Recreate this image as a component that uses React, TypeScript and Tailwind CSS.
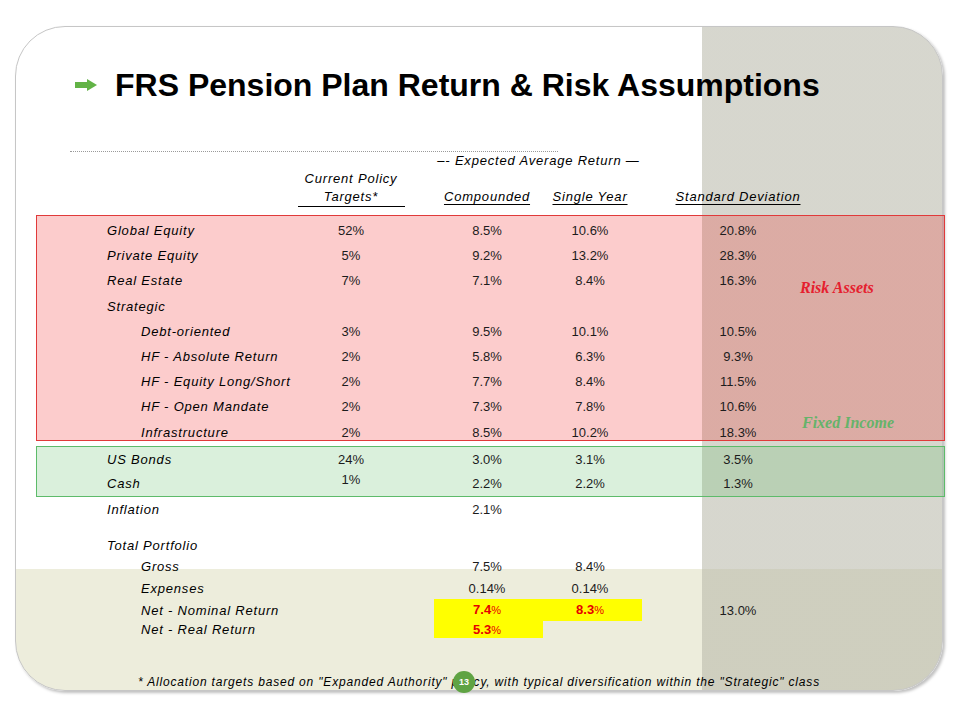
import React from "react";

type RowProps = {
  label: string;
  indent?: boolean;
  policy?: React.ReactNode;
  comp?: React.ReactNode;
  single?: React.ReactNode;
  std?: React.ReactNode;
  h?: string;
  policyClass?: string;
};

function Row({ label, indent, policy, comp, single, std, h = "h-[25.2px]", policyClass = "" }: RowProps) {
  return (
    <div className={`flex items-center ${h}`}>
      <div className={`w-[209px] shrink-0 italic tracking-[0.8px] text-black ${indent ? "pl-[34px]" : ""}`}>
        {label}
      </div>
      <div className={`w-[70px] shrink-0 text-center ${policyClass}`}>{policy}</div>
      <div className="ml-[66px] w-[70px] shrink-0 text-center">{comp}</div>
      <div className="ml-[33px] w-[70px] shrink-0 text-center">{single}</div>
      <div className="ml-[78px] w-[70px] shrink-0 text-center">{std}</div>
    </div>
  );
}

function RedVal({ v }: { v: string }) {
  return (
    <span className="text-[#e60000]">
      <span className="font-bold">{v}</span>
      <span className="text-[11px]">%</span>
    </span>
  );
}

function Arrow() {
  return (
    <svg width="22" height="12" viewBox="0 0 22 12">
      <rect x="0" y="3" width="13" height="6" fill="#62b346" />
      <polygon points="12,0 22,6 12,12" fill="#62b346" />
    </svg>
  );
}

export default function App() {
  return (
    <div className="w-[960px] h-[720px] bg-white pt-[26px] pl-[15px] font-['Liberation_Sans',Arial,sans-serif] text-[13px] leading-[15px] text-[#1c1c1c]">
      <div className="relative w-[928px] h-[665px] rounded-[50px] border border-[#c6c6c6] shadow-[2px_2px_3px_rgba(0,0,0,0.25)] bg-[linear-gradient(to_right,transparent_686px,rgba(183,183,168,0.56)_686px),linear-gradient(to_bottom,#ffffff_542px,#ededdc_542px)] pt-[38px]">
        {/* title */}
        <div className="flex items-center h-[40px] pl-[59px]">
          <Arrow />
          <h1 className="ml-[18px] text-[32px] leading-[40px] font-bold text-black">
            FRS Pension Plan Return &amp; Risk Assumptions
          </h1>
        </div>

        <div className="mt-[46px] ml-[54px] w-[488px] border-t border-dotted border-[#9a9a9a]" />

        {/* column headers */}
        <div className="pl-[91px] italic tracking-[0.8px] text-black">
          <div className="flex h-[16px] items-center">
            <div className="ml-[345px] w-[173px] shrink-0 flex justify-center whitespace-nowrap">
              –- Expected Average Return —
            </div>
          </div>
          <div className="mt-[2px] flex items-end">
            <div className="w-[209px] shrink-0" />
            <div className="w-[70px] shrink-0 flex justify-center">
              <div className="w-[107px] shrink-0 border-b border-black text-center leading-[18px]">
                <div>Current Policy</div>
                <div>Targets*</div>
              </div>
            </div>
            <div className="ml-[66px] w-[70px] shrink-0 flex justify-center leading-[18px] pb-px whitespace-nowrap">
              <span className="underline underline-offset-[3px]">Compounded</span>
            </div>
            <div className="ml-[33px] w-[70px] shrink-0 flex justify-center leading-[18px] pb-px whitespace-nowrap">
              <span className="underline underline-offset-[3px]">Single Year</span>
            </div>
            <div className="ml-[78px] w-[70px] shrink-0 flex justify-center leading-[18px] pb-px whitespace-nowrap">
              <span className="underline underline-offset-[3px]">Standard Deviation</span>
            </div>
          </div>
        </div>

        {/* risk assets */}
        <div className="relative mt-[8px] ml-[20px] -mr-[3px] h-[226px] border border-[#e03a3a] bg-[rgba(240,0,0,0.2)] pt-[2px] pl-[70px]">
          <Row label="Global Equity" policy="52%" comp="8.5%" single="10.6%" std="20.8%" />
          <Row label="Private Equity" policy="5%" comp="9.2%" single="13.2%" std="28.3%" />
          <Row label="Real Estate" policy="7%" comp="7.1%" single="8.4%" std="16.3%" />
          <Row label="Strategic" />
          <Row label="Debt-oriented" indent policy="3%" comp="9.5%" single="10.1%" std="10.5%" />
          <Row label="HF - Absolute Return" indent policy="2%" comp="5.8%" single="6.3%" std="9.3%" />
          <Row label="HF - Equity Long/Short" indent policy="2%" comp="7.7%" single="8.4%" std="11.5%" />
          <Row label="HF - Open Mandate" indent policy="2%" comp="7.3%" single="7.8%" std="10.6%" />
          <Row label="Infrastructure" indent policy="2%" comp="8.5%" single="10.2%" std="18.3%" />
          <span className="absolute left-[763px] top-[63px] font-['Liberation_Serif',serif] italic font-bold text-[16px] leading-[18px] text-[#e5202e]">
            Risk Assets
          </span>
          <span className="absolute left-[765px] top-[198px] font-['Liberation_Serif',serif] italic font-bold text-[16px] leading-[18px] text-[#66b36a]">
            Fixed Income
          </span>
        </div>

        {/* fixed income */}
        <div className="mt-[5px] ml-[20px] -mr-[3px] border border-[#5dbb6a] bg-[rgba(86,186,95,0.22)] pl-[70px]">
          <Row label="US Bonds" policy="24%" comp="3.0%" single="3.1%" std="3.5%" h="h-[24.5px]" />
          <Row label="Cash" policy="1%" comp="2.2%" single="2.2%" std="1.3%" h="h-[24.5px]" policyClass="relative -top-[4px]" />
        </div>

        {/* totals */}
        <div className="pl-[91px]">
          <Row label="Inflation" comp="2.1%" h="h-[25px]" />
          <div className="mt-[12px]">
            <Row label="Total Portfolio" h="h-[22px]" />
          </div>
          <Row label="Gross" indent comp="7.5%" single="8.4%" h="h-[21px]" />
          <Row label="Expenses" indent comp="0.14%" single="0.14%" h="h-[22px]" />
          <div className="flex items-center h-[22px]">
            <div className="w-[209px] shrink-0 pl-[34px] italic tracking-[0.8px] text-black">Net - Nominal Return</div>
            <div className="w-[70px] shrink-0" />
            <div className="ml-[48px] h-full flex items-center bg-[#ffff00] pl-[18px] pr-[17px]">
              <div className="w-[70px] text-center"><RedVal v="7.4" /></div>
              <div className="ml-[33px] w-[70px] text-center"><RedVal v="8.3" /></div>
            </div>
            <div className="ml-[61px] w-[70px] shrink-0 text-center">13.0%</div>
          </div>
          <div className="flex items-center h-[17px]">
            <div className="w-[209px] shrink-0 pl-[34px] italic tracking-[0.8px] text-black">Net - Real Return</div>
            <div className="w-[70px] shrink-0" />
            <div className="ml-[48px] h-full flex items-center bg-[#ffff00] pl-[18px] pr-[21px]">
              <div className="w-[70px] text-center"><RedVal v="5.3" /></div>
            </div>
          </div>
        </div>

        <p className="mt-[37px] text-center italic text-[12px] leading-[14px] tracking-[0.82px] text-black whitespace-nowrap">
          * Allocation targets based on "Expanded Authority" policy, with typical diversification within the "Strategic" class
        </p>

        <div className="absolute left-[437px] top-[644px] w-[22px] h-[22px] rounded-full bg-[#5fa343] flex items-center justify-center text-[9px] font-bold text-white leading-none">
          13
        </div>
      </div>
    </div>
  );
}
